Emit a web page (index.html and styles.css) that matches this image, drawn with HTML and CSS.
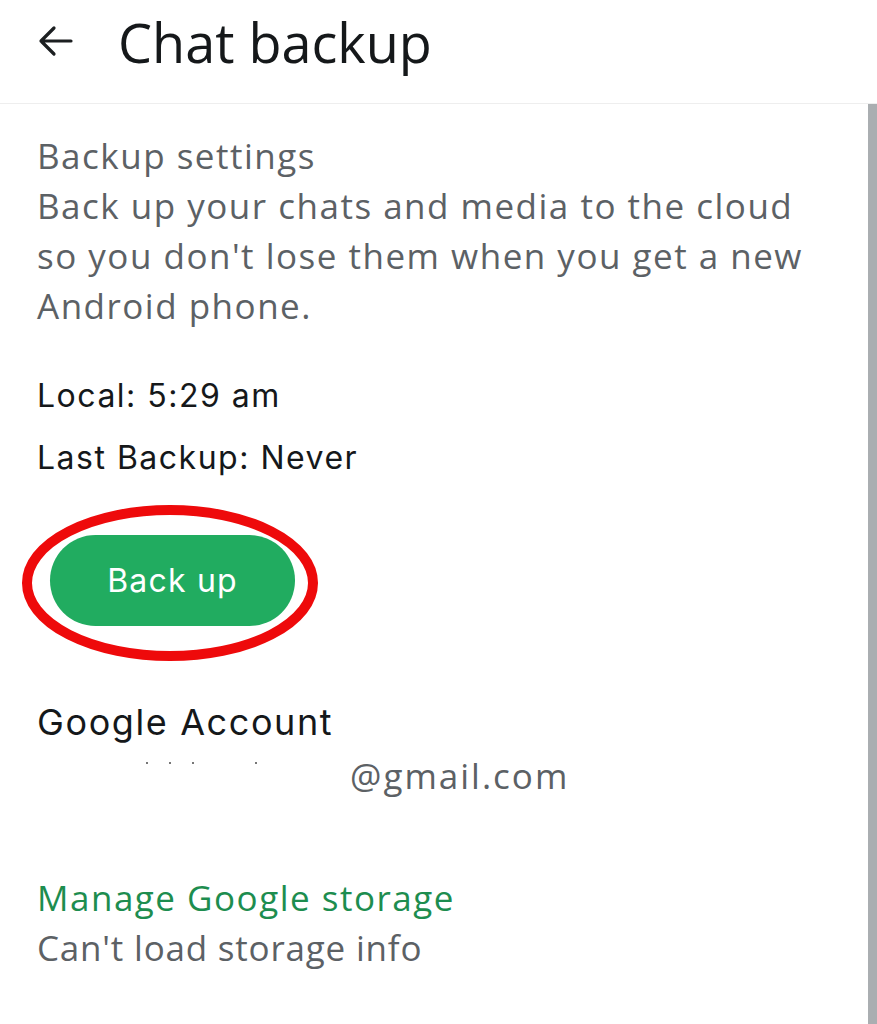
FILE: index.html
```html
<!DOCTYPE html>
<html>
<head>
<meta charset="utf-8">
<link rel="stylesheet" href="styles.css">
</head>
<body>
<header class="appbar">
  <svg class="back" width="36" height="36" viewBox="0 0 36 36"><path d="M34 18H4M17 5L4 18l13 13" fill="none" stroke="#1c1f21" stroke-width="3.2" stroke-linecap="round" stroke-linejoin="round"/></svg>
  <h1 class="title">Chat backup</h1>
</header>
<div class="main">
  <div class="content">
    <p class="muted">Backup settings</p>
    <p class="muted">Back up your chats and media to the cloud so you don't lose them when you get a new Android phone.</p>
    <p class="info first">Local: 5:29 am</p>
    <p class="info">Last Backup: Never</p>
    <div class="btnwrap">
      <button class="btn">Back up</button>
      <svg class="ring" width="310" height="170" viewBox="0 0 310 170"><ellipse cx="155" cy="85" rx="143" ry="73" fill="none" stroke="#ee0a0b" stroke-width="10"/></svg>
    </div>
    <p class="account">Google Account</p>
    <p class="email"><span class="dots"><i></i><i></i><i></i><i class="far"></i></span>@gmail.com</p>
    <p class="link">Manage Google storage</p>
    <p class="muted tight">Can't load storage info</p>
  </div>
  <div class="scroll"></div>
</div>
</body>
</html>
```
FILE: styles.css
```css
html, body { margin: 0; padding: 0; background: #fff; }
body { width: 877px; height: 1024px; overflow: hidden; }
p { margin: 0; }
.appbar {
  height: 104px;
  display: flex;
  align-items: center;
  border-bottom: 1px solid #eeeeee;
  box-sizing: border-box;
  padding-left: 37px;
}
.back { flex: none; margin-top: -22px; }
.title {
  margin: -20px 0 0 45px;
  font-family: "Open Sans", sans-serif;
  font-weight: 400;
  font-size: 54px;
  color: #15181a;
  letter-spacing: 0;
}
.main { display: flex; height: 920px; }
.content { flex: 1; padding: 27px 0 0 37px; }
.scroll { width: 9px; background: #aaaeb1; }
.muted {
  font-family: "Open Sans", sans-serif;
  font-size: 35px;
  line-height: 50px;
  color: #5c6165;
  letter-spacing: 1.5px;
  width: 800px;
}
.muted.tight { letter-spacing: 0.8px; }
.info {
  font-family: "Inter", sans-serif;
  font-size: 32px;
  line-height: 62px;
  color: #15181a;
  letter-spacing: 1.5px;
}
.info.first { margin-top: 34px; }
.btnwrap { position: relative; margin: 46px 0 0 13px; width: 245px; height: 91px; }
.btn {
  display: block;
  width: 245px; height: 91px;
  border: none; border-radius: 46px;
  background: #21ac60;
  color: #fff;
  font-family: "Inter", sans-serif;
  font-size: 32px;
  letter-spacing: 1.2px;
  padding: 0;
}
.ring { position: absolute; left: -35px; top: -37px; pointer-events: none; }
.account {
  margin-top: 71px;
  font-family: "Inter", sans-serif;
  font-size: 36px;
  line-height: 50px;
  color: #15181a;
  letter-spacing: 1.6px;
}
.email {
  margin-top: 4px;
  font-family: "Open Sans", sans-serif;
  font-size: 35px;
  line-height: 50px;
  color: #5c6165;
  letter-spacing: 2px;
  padding-left: 313px;
  position: relative;
}
.dots { position: absolute; left: 109px; top: 11px; display: flex; }
.dots i { width: 2px; height: 2px; background: #777; margin-right: 21px; }
.dots i.far { margin-left: 40px; }
.link {
  margin-top: 72px;
  font-family: "Open Sans", sans-serif;
  font-size: 35px;
  line-height: 50px;
  color: #1d8d4f;
  letter-spacing: 1.5px;
}
```
